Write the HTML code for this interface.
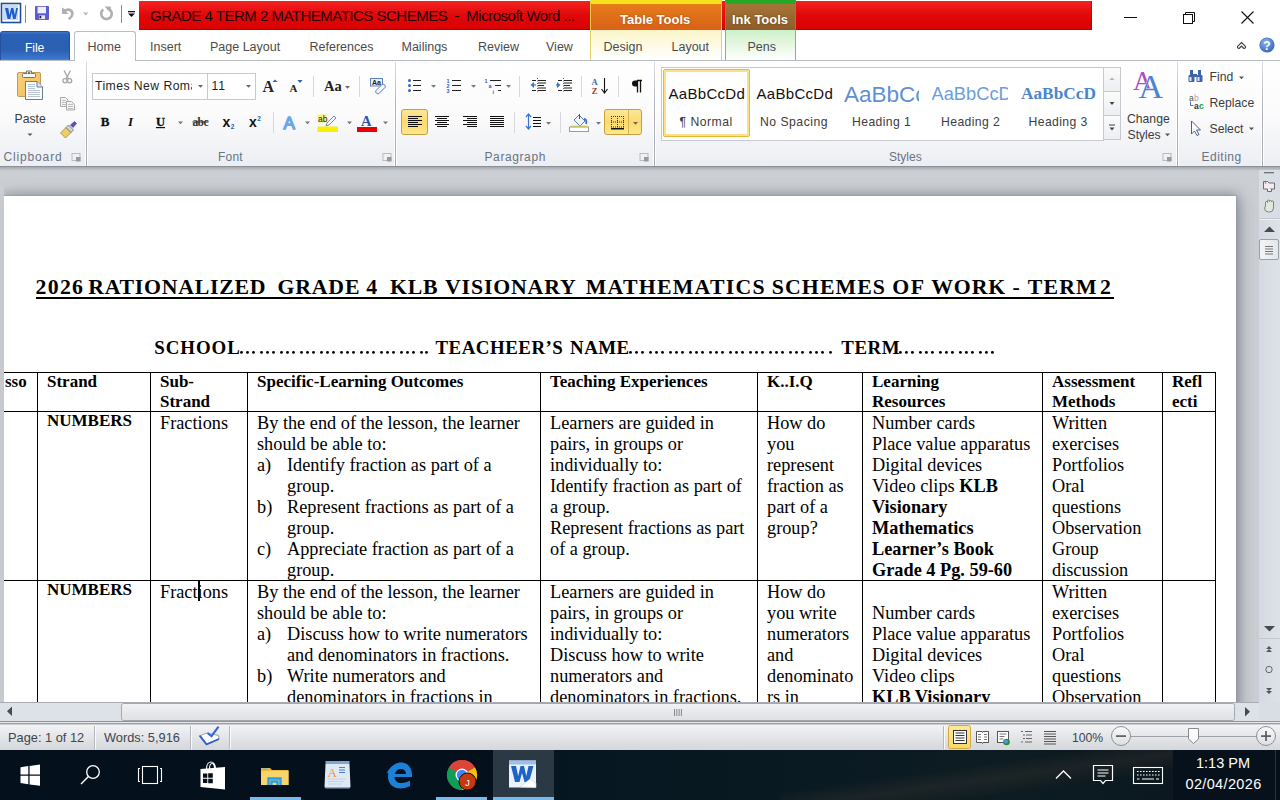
<!DOCTYPE html>
<html><head><meta charset="utf-8">
<style>
*{box-sizing:border-box;margin:0;padding:0}
html,body{width:1280px;height:800px;overflow:hidden;background:#fff;font-family:"Liberation Sans",sans-serif;position:relative}
.a{position:absolute}
.ui{font-family:"Liberation Sans",sans-serif;font-size:12px;color:#3b3b3b;white-space:nowrap}
/* title bar */
#title{left:0;top:0;width:1280px;height:30px;background:#fff}
#redbar{left:139px;top:1px;width:953px;height:29px;background:linear-gradient(#f52222,#e00808 50%,#d90000);box-shadow:inset -1px -1px 0 rgba(150,0,0,.5)}
#redbar span{position:absolute;left:11px;top:6px;font-size:15px;color:#1e0303;letter-spacing:-0.5px}
/* tabs */
#tabs{left:0;top:30px;width:1280px;height:30px;background:#fff}
.tab{position:absolute;top:10px;font-size:12.5px;color:#4b4b4b}
/* ribbon */
#ribbon{left:0;top:60px;width:1280px;height:107px;background:linear-gradient(#ffffff 0%,#fbfbfc 50%,#eceef2 100%);border-top:1px solid #b9bdc3;border-bottom:1px solid #8c9097}
.gsep{position:absolute;top:62px;width:1px;height:104px;background:linear-gradient(#d8dbe0,#b0b4ba 40%,#a9adb3);box-shadow:1px 0 0 #fff,-1px 0 0 #fff}
.glabel{position:absolute;top:149.7px;font-size:12px;color:#6a7384;white-space:nowrap}
.rt{position:absolute;font-size:12.2px;color:#3c3c3c;white-space:nowrap}
/* doc area */
#doc{left:0;top:167px;width:1280px;height:535px;background:#cbced3;overflow:hidden}
#page{left:4px;top:29px;width:1232px;height:700px;background:#fff;box-shadow:0 0 0 1px rgba(150,156,165,.6),0 0 11px 2px rgba(95,100,108,.55),10px 0 16px -6px rgba(110,114,120,.35)}
#shtop{left:4px;top:19px;width:1255px;height:10px;background:linear-gradient(rgba(150,154,160,0),rgba(150,154,160,.75))}
#shright{left:1236px;top:19px;width:23px;height:520px;background:linear-gradient(90deg,rgba(140,144,150,.85),rgba(170,174,180,.45) 35%,rgba(203,206,211,0))}
#shrib{left:0;top:0;width:1280px;height:4px;background:linear-gradient(rgba(160,164,170,.9),rgba(203,206,211,0))}
.serif{font-family:"Liberation Serif",serif;color:#000;white-space:nowrap}
/* scrollbars */
#vscroll{left:1259px;top:170px;width:21px;height:532px;background:linear-gradient(90deg,#d5d9e1,#dde1e8);overflow:hidden}
#hscroll{left:0;top:702px;width:1280px;height:21px;background:#dde1e8}
#status{left:0;top:725px;width:1280px;height:25px;background:linear-gradient(#f2f3f5,#d4d7db)}
#taskbar{left:0;top:750px;width:1280px;height:50px;background:#04101c}

#docin{position:absolute;left:0;top:-167px;width:1280px;height:800px}
.t,.th,.tt,.sc{position:absolute;font-family:"Liberation Serif",serif;color:#000;white-space:nowrap}
.t{font-size:18.3px;line-height:21.03px}
.th{font-size:17px;line-height:20px;font-weight:bold}
.tt{font-size:21.8px;line-height:20px;font-weight:bold;letter-spacing:0.55px;top:276.6px}
.sc{font-size:18.9px;line-height:20px;font-weight:bold;letter-spacing:0.5px;top:338.4px}
.dots{overflow:hidden;letter-spacing:0}
.ln{position:absolute;background:#000}
</style></head>
<body>
<div id="title" class="a">
  <svg class="a" style="left:0;top:0" width="139" height="30" viewBox="0 0 139 30">
    <rect x="1.5" y="3.5" width="19" height="19" fill="#fff" stroke="#1f4f9c" stroke-width="1.6"/>
    <rect x="3" y="5" width="15" height="15" fill="#c9dcf5"/>
    <path d="M5 8h3.2l1.3 7 1.6-7h2.2l1.6 7 1.3-7H18l-2.4 11h-2.4l-1.5-6.5-1.5 6.5H7.6z" fill="#1a5fc9"/>
    <rect x="25" y="5" width="1" height="18" fill="#8a8a8a"/>
    <rect x="35" y="6" width="14" height="14" rx="1" fill="#5b5bd6"/>
    <rect x="37.5" y="6.8" width="8.5" height="6.5" fill="#eef0fa"/>
    <rect x="39" y="15.3" width="6" height="3.8" fill="#e8e8f0"/>
    <rect x="39.5" y="15.8" width="1.8" height="2.5" fill="#222"/>
    <path d="M62 7.5v6.5h6.5l-2.4-2.4c1.8-1.3 4.2-.6 4.8 1.4.6 2-.6 3.8-3 5.2l1.3 1.7c3.6-1.9 5.2-5 4.2-8.2-1.1-3.4-5.4-4.6-8.4-2.4z" fill="#b0b0b0"/>
    <path d="M83 12.5h5.5l-2.75 3z" fill="#b9b9b9"/>
    <path d="M103.2 9.6a5.3 5.3 0 1 0 3.8-1.1" fill="none" stroke="#b0b0b0" stroke-width="2.6"/>
    <path d="M104.5 6.5h6.3v6.3z" fill="#b0b0b0"/>
    <rect x="121" y="5" width="1" height="18" fill="#8a8a8a"/>
    <rect x="128" y="11" width="7" height="1.3" fill="#111"/>
    <path d="M128 13.5h7l-3.5 3.6z" fill="#111"/>
  </svg>
  <div id="redbar" class="a"><span>GRADE 4 TERM 2 MATHEMATICS SCHEMES &nbsp;-&nbsp; Microsoft Word ...</span></div>
  <div class="a" style="left:590px;top:0;width:132px;height:30px;background:linear-gradient(#e8801a,#d86118);border-left:1px solid #f2d24a;border-right:1px solid #f2d24a">
    <div class="a" style="left:0;top:0;width:130px;height:4px;background:#f7e11c"></div>
    <div class="a" style="left:29px;top:11.5px;font-size:13px;font-weight:bold;color:#fff;text-shadow:0 0 2px rgba(120,50,0,.6)">Table Tools</div>
  </div>
  <div class="a" style="left:722px;top:1px;width:3px;height:28px;background:linear-gradient(#f41c1c,#d80000)"></div>
  <div class="a" style="left:725px;top:0;width:71px;height:30px;background:linear-gradient(#a97a3a,#8e5b2b);border-left:1px solid #3cad3c;border-right:1px solid #3cad3c">
    <div class="a" style="left:0;top:0;width:69px;height:4px;background:#23a923"></div>
    <div class="a" style="left:6px;top:11.5px;font-size:13px;font-weight:bold;color:#fff;text-shadow:0 0 2px rgba(60,40,0,.6)">Ink Tools</div>
  </div>
  <svg class="a" style="left:1110px;top:0" width="170" height="30">
    <rect x="14" y="17" width="13" height="1" fill="#111"/>
    <rect x="73.5" y="14.5" width="9" height="9" fill="none" stroke="#111"/>
    <path d="M75.5 14.5v-2h9v9h-2" fill="none" stroke="#111"/>
    <path d="M131.5 11.5l12 12M143.5 11.5l-12 12" stroke="#111" stroke-width="1.1"/>
  </svg>
</div>
<div id="tabs" class="a">
  <div class="a" style="left:0;top:1px;width:70px;height:30px;border-radius:3px 3px 0 0;background:linear-gradient(#3d78cf 0%,#2b62b6 8%,#2a5fb2 60%,#3a76cc 92%,#5c9ae0 100%);border:1px solid #2451a0;border-bottom:none"></div>
  <div class="a" style="left:25px;top:11px;font-size:12.2px;color:#fff;letter-spacing:-0.1px">File</div>
  <div class="a" style="left:74px;top:1px;width:62px;height:30px;border-radius:3px 3px 0 0;background:#fff;border:1px solid #b9bdc3;border-bottom:none"></div>
  <div class="tab" style="left:87.5px">Home</div>
  <div class="tab" style="left:150px">Insert</div>
  <div class="tab" style="left:210px">Page Layout</div>
  <div class="tab" style="left:309.5px">References</div>
  <div class="tab" style="left:401.5px">Mailings</div>
  <div class="tab" style="left:478px">Review</div>
  <div class="tab" style="left:546px">View</div>
  <div class="a" style="left:590px;top:0;width:132px;height:30px;background:linear-gradient(#fbf4c6,#fdfbe8 55%,#ffffff);border-left:1px solid #e6d06a;border-right:1px solid #e6d06a"></div>
  <div class="tab" style="left:603.5px">Design</div>
  <div class="tab" style="left:671.5px">Layout</div>
  <div class="a" style="left:725px;top:0;width:71px;height:30px;background:linear-gradient(#cdf0c8,#e8f8e4 55%,#ffffff);border-left:1px solid #6cc46c;border-right:1px solid #6cc46c"></div>
  <div class="tab" style="left:747.5px">Pens</div>
  <svg class="a" style="left:1230px;top:0" width="50" height="30">
    <path d="M7.8 16.2l3.7-3.7 3.7 3.7c.8.8.3 2.2-.9 2.2-.4 0-.7-.2-.9-.4l-1.9-1.9-1.9 1.9c-.2.2-.5.4-.9.4-1.2 0-1.7-1.4-.9-2.2z" fill="#fff" stroke="#3a3a3a" stroke-width="1.1"/>
    <circle cx="37" cy="15" r="7.6" fill="#3f72c4"/>
    <circle cx="37" cy="15" r="7" fill="url(#hg)"/>
    <defs><radialGradient id="hg" cx=".4" cy=".3" r=".8"><stop offset="0" stop-color="#8db4ea"/><stop offset="1" stop-color="#2f62b8"/></radialGradient></defs>
    <text x="37" y="20" text-anchor="middle" font-family="Liberation Sans" font-weight="bold" font-size="12" fill="#fff">?</text>
  </svg>
</div>
<div id="ribbon" class="a"><div class="a" style="left:0;top:-61px;width:1280px;height:170px">
  <div class="a" style="left:75px;top:60px;width:60px;height:1px;background:#fff"></div>
    <div class="gsep" style="left:86px"></div>
  <div class="gsep" style="left:395px"></div>
  <div class="gsep" style="left:654px"></div>
  <div class="gsep" style="left:1177px"></div>
  <div class="gsep" style="left:1262px"></div>
  <div class="glabel" style="left:3.5px;letter-spacing:0.85px">Clipboard</div>
  <div class="glabel" style="left:218px;letter-spacing:0.2px">Font</div>
  <div class="glabel" style="left:484.5px;letter-spacing:0.6px">Paragraph</div>
  <div class="glabel" style="left:889px">Styles</div>
  <div class="glabel" style="left:1201.5px;letter-spacing:0.5px">Editing</div>
  <div class="rt" style="left:14.5px;top:112px">Paste</div>
  <div class="a" style="left:92px;top:73px;width:116px;height:27px;background:#fff;border:1px solid #c6cacf"></div>
  <div class="a" style="left:207px;top:73px;width:49px;height:27px;background:#fff;border:1px solid #c6cacf"></div>
  <div class="a" style="left:95px;top:78.5px;width:97px;height:16px;overflow:hidden;font-size:12.2px;color:#1e1e1e;white-space:nowrap;letter-spacing:0.45px">Times New Roman</div>
  <div class="a" style="left:211.5px;top:78.5px;font-size:12.2px;color:#1e1e1e;letter-spacing:1px">11</div>
  <div class="gallery a" style="left:661px;top:67px;width:443px;height:74px;background:#fff;border:1px solid #c6cacf"></div>
  <div class="a" style="left:663px;top:69px;width:87px;height:68px;border:1px solid #e8b83a;border-radius:2px;background:#fff;box-shadow:inset 0 0 0 2px #fbe08a"></div>
  <div class="a" style="left:668.5px;top:85px;font-size:15px;color:#111;white-space:nowrap;letter-spacing:0.3px">AaBbCcDd</div>
  <div class="a" style="left:756.5px;top:85px;font-size:15px;color:#111;white-space:nowrap;letter-spacing:0.3px">AaBbCcDd</div>
  <div class="a" style="left:844px;top:81.5px;width:75px;overflow:hidden;font-size:22.5px;color:#5d90d4;white-space:nowrap">AaBbCc</div>
  <div class="a" style="left:931.5px;top:83px;width:76px;overflow:hidden;font-size:18.3px;color:#6b9ddb;white-space:nowrap">AaBbCcD</div>
  <div class="a" style="left:1021px;top:84px;font-family:'Liberation Serif',serif;font-weight:bold;font-size:17.3px;color:#4a86d0;white-space:nowrap">AaBbCcD</div>
  <div class="rt" style="left:679.5px;top:114.5px;letter-spacing:0.5px">¶ Normal</div>
  <div class="rt" style="left:760px;top:114.5px;letter-spacing:0.5px">No Spacing</div>
  <div class="rt" style="left:852px;top:114.5px;letter-spacing:0.4px">Heading 1</div>
  <div class="rt" style="left:941px;top:114.5px;letter-spacing:0.4px">Heading 2</div>
  <div class="rt" style="left:1028.5px;top:114.5px;letter-spacing:0.4px">Heading 3</div>
  <div class="a" style="left:1103px;top:67px;width:18px;height:25px;border:1px solid #c6cacf;background:linear-gradient(#fbfbfc,#eceef1)"></div>
  <div class="a" style="left:1103px;top:91px;width:18px;height:25px;border:1px solid #c6cacf;background:linear-gradient(#fbfbfc,#eceef1)"></div>
  <div class="a" style="left:1103px;top:115px;width:18px;height:25px;border:1px solid #c6cacf;background:linear-gradient(#fbfbfc,#eceef1)"></div>
  <div class="rt" style="left:1127px;top:112px">Change</div>
  <div class="rt" style="left:1127.5px;top:128px">Styles</div>
  <div class="rt" style="left:1209.5px;top:70px">Find</div>
  <div class="rt" style="left:1209.5px;top:96px">Replace</div>
  <div class="rt" style="left:1209.5px;top:122px">Select</div>
<svg class="a" style="left:0;top:0" width="1280" height="170" viewBox="0 0 1280 170">
<defs>
 <linearGradient id="gold" x1="0" y1="0" x2="0" y2="1"><stop offset="0" stop-color="#fde79a"/><stop offset=".5" stop-color="#fcd96e"/><stop offset="1" stop-color="#fde98c"/></linearGradient>
 <linearGradient id="clipb" x1="0" y1="0" x2="1" y2="1"><stop offset="0" stop-color="#f9d27a"/><stop offset="1" stop-color="#f0bd5a"/></linearGradient>
</defs>
<!-- clipboard -->
<rect x="17.5" y="72.5" width="23" height="24" rx="1.5" fill="url(#clipb)" stroke="#c49a55"/>
<rect x="22.5" y="73.5" width="13" height="4" rx="1" fill="#f4f6f8" stroke="#66768a"/>
<path d="M26.5 73.5v-2.5h5v2.5" fill="#e8ecef" stroke="#66768a"/>
<circle cx="29" cy="73" r="1" fill="#6a5030"/>
<path d="M25.5 81.5h11.5l5.5 5.5v12.5h-17z" fill="#fafbfd" stroke="#6b7d93"/>
<path d="M37 81.5v5.5h5.5" fill="#dfe6ee" stroke="#6b7d93"/>
<path d="M28 84.5h7M28 86.5h7M28 88.5h7M28 90.5h12M28 92.5h12M28 94.5h12M28 96.5h12" stroke="#b8c4d2" stroke-width="1"/>
<path d="M27.5 133.5h5l-2.5 2.5z" fill="#555"/>
<!-- cut -->
<path d="M64 70.5l4.5 8.5M70.5 70.5l-4.5 8.5" stroke="#a6a6a6" stroke-width="1.3"/>
<circle cx="65" cy="80.8" r="2.1" fill="none" stroke="#a6a6a6" stroke-width="1.3"/>
<circle cx="69.6" cy="80.8" r="2.1" fill="none" stroke="#a6a6a6" stroke-width="1.3"/>
<!-- copy -->
<path d="M60.5 97.5h5l2.5 2.5v6.5h-7.5z" fill="#f4f4f4" stroke="#a9a9a9"/>
<path d="M66.5 101.5h5l3 3v5.5h-8z" fill="#f4f4f4" stroke="#a9a9a9"/>
<path d="M62 100.5h4M62 102.5h4M62 104.5h4M68 104.5h5M68 106.5h5M68 108.5h5" stroke="#bdbdbd"/>
<!-- format painter -->
<path d="M60.5 133l5.5-5.5 5 5-5.5 5.5z" fill="#ecd064" stroke="#9a8438" stroke-width=".8"/>
<path d="M66 127.5l2.5-2.5 5 5-2.5 2.5z" fill="#d0d3da" stroke="#6a6a6a" stroke-width=".8"/>
<path d="M70.5 125l4-3.5 2 2-3.5 4z" fill="#5454c8" stroke="#34348a" stroke-width=".6"/>
<rect x="72" y="153.5" width="8" height="7" fill="none" stroke="#bbb"/>
<rect x="76" y="157" width="4.5" height="4.5" fill="#999"/>
<!-- font combos arrows -->
<path d="M198 85h5l-2.5 2.8z" fill="#666"/>
<path d="M246 85h5l-2.5 2.8z" fill="#666"/>
<!-- grow / shrink -->
<text x="262.5" y="92" font-family="Liberation Serif" font-weight="bold" font-size="16" fill="#222">A</text>
<path d="M272.5 82h5l-2.5-2.6z" fill="#2f5eb8"/>
<text x="289.5" y="92" font-family="Liberation Serif" font-weight="bold" font-size="11" fill="#222">A</text>
<path d="M297.5 80h5l-2.5 3z" fill="#2f5eb8"/>
<rect x="313" y="76" width="1" height="21" fill="#d5d8dc"/>
<text x="324" y="91" font-family="Liberation Serif" font-weight="bold" font-size="14.5" fill="#222">Aa</text>
<path d="M345 86h5l-2.5 2.8z" fill="#666"/>
<rect x="359" y="76" width="1" height="21" fill="#d5d8dc"/>
<rect x="370.5" y="78.5" width="12" height="7.5" fill="#e9f0fb" stroke="#5c82c0"/>
<text x="372" y="85" font-family="Liberation Sans" font-weight="bold" font-size="7" fill="#222">Aa</text>
<path d="M376 90.5l6-6a2.2 2.2 0 0 1 3 3l-6 6a2.2 2.2 0 0 1-3-3z" fill="#f2f5fa" stroke="#5a7fbf"/>
<!-- row 2 -->
<text x="100.8" y="126" font-family="Liberation Serif" font-weight="bold" font-size="13" fill="#111" stroke="#111" stroke-width=".3">B</text>
<text x="128" y="126" font-family="Liberation Serif" font-style="italic" font-weight="bold" font-size="13" fill="#111">I</text>
<text x="156" y="126" font-family="Liberation Serif" font-weight="bold" font-size="12.5" fill="#111" stroke="#111" stroke-width=".3">U</text>
<rect x="156" y="127" width="9" height="1.2" fill="#111"/>
<path d="M178 121.5h5l-2.5 2.8z" fill="#777"/>
<text x="192.5" y="126" font-family="Liberation Serif" font-weight="bold" font-size="11.5" fill="#333" textLength="16">abc</text>
<rect x="192.5" y="121.5" width="16" height="1" fill="#333"/>
<text x="222.5" y="126.5" font-family="Liberation Sans" font-weight="bold" font-size="14" fill="#111">x</text>
<text x="230.8" y="128.5" font-family="Liberation Sans" font-weight="bold" font-size="6.5" fill="#2f5eb8">2</text>
<text x="249" y="126.5" font-family="Liberation Sans" font-weight="bold" font-size="14" fill="#111">x</text>
<text x="257.3" y="120.5" font-family="Liberation Sans" font-weight="bold" font-size="6.5" fill="#2f5eb8">2</text>
<rect x="273" y="112" width="1" height="21" fill="#d5d8dc"/>
<text x="283.5" y="129" font-family="Liberation Sans" font-size="17" fill="#cfe3fb" stroke="#6aa6e8" stroke-width="1.4">A</text>
<path d="M305 121.5h5l-2.5 2.8z" fill="#777"/>
<rect x="317.5" y="114.5" width="9" height="8" fill="#f6f27a"/>
<text x="318" y="121.5" font-family="Liberation Sans" font-size="8.5" fill="#222">ab</text>
<path d="M327 123l7-7 2 2-7 7-3 1z" fill="#f3f6fb" stroke="#4d6fa6" stroke-width=".8"/>
<rect x="317.5" y="126.5" width="20.5" height="5.5" fill="#f7f000"/>
<path d="M347 121.5h5l-2.5 2.8z" fill="#777"/>
<text x="361" y="126" font-family="Liberation Serif" font-weight="bold" font-size="14.5" fill="#2a55b0">A</text>
<rect x="357" y="127" width="20" height="5" fill="#ea0000"/>
<path d="M383 121.5h5l-2.5 2.8z" fill="#777"/>
<rect x="383" y="153.5" width="8" height="7" fill="none" stroke="#bbb"/>
<rect x="387" y="157" width="4.5" height="4.5" fill="#999"/>
<!-- paragraph row 1 -->
<g fill="#3a62b8"><circle cx="409.5" cy="80.5" r="1.5"/><circle cx="409.5" cy="85.5" r="1.5"/><circle cx="409.5" cy="90.5" r="1.5"/></g>
<path d="M413 80.5h8M413 85.5h8M413 90.5h8" stroke="#222" stroke-width="1.2"/>
<path d="M431 85h5l-2.5 2.8z" fill="#777"/>
<g font-family="Liberation Sans" font-weight="bold" font-size="5.5" fill="#3560b8"><text x="446.5" y="83">1</text><text x="446.5" y="88">2</text><text x="446.5" y="93">3</text></g>
<path d="M452 80.5h9M452 85.5h9M452 90.5h9" stroke="#222" stroke-width="1.2"/>
<path d="M471 85h5l-2.5 2.8z" fill="#777"/>
<g font-family="Liberation Sans" font-weight="bold" font-size="5.5" fill="#3560b8"><text x="484.5" y="83">1</text><text x="488.5" y="88">a</text><text x="492.5" y="93.5">i</text></g>
<path d="M490 80.5h11M495 85.5h6M498 90.5h3" stroke="#222" stroke-width="1.2"/>
<path d="M506 85h5l-2.5 2.8z" fill="#777"/>
<rect x="519" y="76" width="1" height="21" fill="#d5d8dc"/>
<path d="M532 80.5h4M538 80.5h8M538 83h8M538 85.5h6M538 88h8M532 90.5h4M538 90.5h8" stroke="#222" stroke-width="1.1"/>
<path d="M537.5 78v15" stroke="#333" stroke-dasharray="1 1.5" stroke-width=".8"/>
<path d="M530.5 85l3.5-3v6z" fill="#3a72d8"/><path d="M533 85h3" stroke="#3a72d8" stroke-width="1.2"/>
<path d="M558 80.5h4M564 80.5h8M564 83h8M564 85.5h6M564 88h8M558 90.5h4M564 90.5h8" stroke="#222" stroke-width="1.1"/>
<path d="M563.5 78v15" stroke="#333" stroke-dasharray="1 1.5" stroke-width=".8"/>
<path d="M560.5 85l-3.5-3v6z" fill="#3a72d8"/><path d="M556 85h3" stroke="#3a72d8" stroke-width="1.2"/>
<rect x="581" y="76" width="1" height="21" fill="#d5d8dc"/>
<text x="591.5" y="85" font-family="Liberation Serif" font-weight="bold" font-size="8.5" fill="#3560b8">A</text>
<text x="591.8" y="93.5" font-family="Liberation Serif" font-weight="bold" font-size="8.5" fill="#a03030">Z</text>
<path d="M604.5 78v14" stroke="#111" stroke-width="1.1"/><path d="M601.5 89l3 4 3-4" fill="none" stroke="#111" stroke-width="1.1"/>
<rect x="618" y="76" width="1" height="21" fill="#d5d8dc"/>
<path d="M637 80.5h5M637.5 80.5v12M640.5 80.5v12" stroke="#111" stroke-width="1.3"/>
<path d="M637 80.5h-2a3 3 0 0 0 0 6h2z" fill="#111"/>
<!-- paragraph row 2 -->
<rect x="401.5" y="109.5" width="26" height="25" rx="2.5" fill="url(#gold)" stroke="#c6a03e"/>
<path d="M408 116.5h14M408 118.5h10M408 120.5h14M408 122.5h10M408 124.5h14M408 126.5h10" stroke="#111" stroke-width="1"/>
<path d="M435 116.5h14M437 118.5h10M435 120.5h14M437 122.5h10M435 124.5h14M437 126.5h10" stroke="#111" stroke-width="1"/>
<path d="M463 116.5h14M467 118.5h10M463 120.5h14M467 122.5h10M463 124.5h14M467 126.5h10" stroke="#111" stroke-width="1"/>
<path d="M490 116.5h14M490 118.5h14M490 120.5h14M490 122.5h14M490 124.5h14M490 126.5h14" stroke="#111" stroke-width="1"/>
<rect x="514" y="112" width="1" height="21" fill="#d5d8dc"/>
<path d="M528.5 114v15" stroke="#3a72d8" stroke-width="1.2"/>
<path d="M526 117l2.5-3 2.5 3M526 126l2.5 3 2.5-3" fill="none" stroke="#3a72d8" stroke-width="1.2"/>
<path d="M533 117.5h8M533 120.5h8M533 123.5h8M533 126.5h8" stroke="#111" stroke-width="1.1"/>
<path d="M546 122h5l-2.5 2.8z" fill="#777"/>
<rect x="560" y="112" width="1" height="21" fill="#d5d8dc"/>
<path d="M574 120l5-5 6 6-5 5z" fill="#eef3fb" stroke="#4a6ea8" stroke-width=".9"/>
<path d="M579.5 114v5" stroke="#555" stroke-width="1"/>
<path d="M584 119c2 0 3 2 2 5" fill="none" stroke="#3a6fd0" stroke-width="1.8"/>
<rect x="571" y="125.5" width="16" height="1.3" fill="#f0e800"/>
<rect x="569.5" y="127" width="19" height="4.5" fill="#fff" stroke="#999"/>
<path d="M596 122h5l-2.5 2.8z" fill="#777"/>
<rect x="604.5" y="109.5" width="37" height="25" rx="2.5" fill="url(#gold)" stroke="#c6a03e"/>
<path d="M628.5 110v24" stroke="#d8b458"/>
<path d="M611 116.5h13M611 122h13M611 127h13M611.5 116v11M617.5 116v11M623.5 116v11" stroke="#333" stroke-width="1" stroke-dasharray="1 1"/>
<rect x="611" y="128" width="13" height="1.5" fill="#111"/>
<path d="M633 122h5l-2.5 2.8z" fill="#666"/>
<rect x="640" y="153.5" width="8" height="7" fill="none" stroke="#bbb"/>
<rect x="644" y="157" width="4.5" height="4.5" fill="#999"/>
<!-- styles gallery arrows -->
<path d="M1109.5 80h5l-2.5-2.6z" fill="#b0b0b0"/>
<path d="M1109.5 102h5l-2.5 3z" fill="#444"/>
<rect x="1109" y="124.5" width="6" height="1" fill="#444"/>
<path d="M1109.5 127.5h5l-2.5 3z" fill="#444"/>
<!-- change styles -->
<text x="1133" y="89.8" font-family="Liberation Serif" font-size="27" fill="#b24ac4">A</text>
<text x="1138.5" y="98.3" font-family="Liberation Serif" font-size="34" fill="#4d83d4" stroke="#fff" stroke-width=".6" paint-order="stroke">A</text>
<path d="M1165 133.5h5l-2.5 2.8z" fill="#555"/>
<rect x="1163" y="153.5" width="8" height="7" fill="none" stroke="#bbb"/>
<rect x="1167" y="157" width="4.5" height="4.5" fill="#999"/>
<!-- editing -->
<g fill="#3f63a8"><rect x="1188.5" y="75" width="6" height="7" rx="1"/><rect x="1196.5" y="75" width="6" height="7" rx="1"/><rect x="1190" y="70" width="3" height="6"/><rect x="1198" y="70" width="3" height="6"/><rect x="1193" y="74" width="4" height="3"/></g>
<g fill="#dfe8f6"><rect x="1189.5" y="77" width="2" height="4"/><rect x="1197.5" y="77" width="2" height="4"/></g>
<path d="M1239 76.5h5l-2.5 2.8z" fill="#555"/>
<text x="1189" y="100.5" font-family="Liberation Sans" font-size="8.5" fill="#555">a</text>
<text x="1194" y="100.5" font-family="Liberation Sans" font-size="8.5" fill="#aaa">b</text>
<text x="1194" y="108.5" font-family="Liberation Sans" font-weight="bold" font-size="8.5" fill="#333">a</text>
<text x="1199" y="108.5" font-family="Liberation Sans" font-weight="bold" font-size="8.5" fill="#1a9a1a">c</text>
<path d="M1190.5 101.5v4h3" fill="none" stroke="#3060b0" stroke-width=".9"/>
<path d="M1191.5 121l0 13 3-3 2.5 4.5 2-1-2.5-4.5 4 0z" fill="#fff" stroke="#3a4f78" stroke-width=".9"/>
<path d="M1249 127.5h5l-2.5 2.8z" fill="#555"/>
</svg>

</div></div>
<div id="doc" class="a">
  <div id="shrib" class="a"></div><div id="page" class="a"></div><div class="a" style="left:0;top:19px;width:4px;height:520px;background:linear-gradient(#cbced3,#c6c9ce 20px)"></div>
<div id="docin">
<div class="tt" style="left:35.5px;letter-spacing:1.3px">2026</div>
<div class="tt" style="left:88.2px;letter-spacing:0.75px">RATIONALIZED</div>
<div class="tt" style="left:277.5px;letter-spacing:0.8px">GRADE</div>
<div class="tt" style="left:366.3px;letter-spacing:0.55px">4</div>
<div class="tt" style="left:390px;letter-spacing:0.8px">KLB</div>
<div class="tt" style="left:445px;letter-spacing:0.85px">VISIONARY</div>
<div class="tt" style="left:585.8px;letter-spacing:1.25px">MATHEMATICS</div>
<div class="tt" style="left:771.8px;letter-spacing:1.1px">SCHEMES</div>
<div class="tt" style="left:892.3px;letter-spacing:1.5px">OF</div>
<div class="tt" style="left:931.2px;letter-spacing:0.85px">WORK</div>
<div class="tt" style="left:1012.5px;letter-spacing:0.55px">-</div>
<div class="tt" style="left:1027.7px;letter-spacing:1.2px">TERM</div>
<div class="tt" style="left:1100px;letter-spacing:3.5px">2</div>
<div class="ln" style="left:36px;top:297px;width:1078px;height:2px"></div>
<div class="sc" style="left:154.2px;letter-spacing:0.95px">SCHOOL</div>
<div class="sc" style="left:435.5px;letter-spacing:0.5px">TEACHEER’S</div>
<div class="sc" style="left:570px;letter-spacing:0.5px">NAME</div>
<div class="sc" style="left:841.3px;letter-spacing:0.5px">TERM</div>
<svg style="position:absolute;left:0;top:340px" width="1280" height="20" viewBox="0 340 1280 20"><circle cx="241.5" cy="352.4" r="1.45"/><circle cx="247.5" cy="352.4" r="1.45"/><circle cx="253.5" cy="352.4" r="1.45"/><circle cx="261.5" cy="352.4" r="1.45"/><circle cx="267.5" cy="352.4" r="1.45"/><circle cx="273.5" cy="352.4" r="1.45"/><circle cx="281.5" cy="352.4" r="1.45"/><circle cx="287.5" cy="352.4" r="1.45"/><circle cx="293.5" cy="352.4" r="1.45"/><circle cx="301.5" cy="352.4" r="1.45"/><circle cx="307.5" cy="352.4" r="1.45"/><circle cx="313.5" cy="352.4" r="1.45"/><circle cx="321.5" cy="352.4" r="1.45"/><circle cx="327.5" cy="352.4" r="1.45"/><circle cx="333.5" cy="352.4" r="1.45"/><circle cx="341.5" cy="352.4" r="1.45"/><circle cx="347.5" cy="352.4" r="1.45"/><circle cx="353.5" cy="352.4" r="1.45"/><circle cx="361.5" cy="352.4" r="1.45"/><circle cx="367.5" cy="352.4" r="1.45"/><circle cx="373.5" cy="352.4" r="1.45"/><circle cx="381.5" cy="352.4" r="1.45"/><circle cx="387.5" cy="352.4" r="1.45"/><circle cx="393.5" cy="352.4" r="1.45"/><circle cx="401.5" cy="352.4" r="1.45"/><circle cx="407.5" cy="352.4" r="1.45"/><circle cx="413.5" cy="352.4" r="1.45"/><circle cx="421.5" cy="352.4" r="1.45"/><circle cx="426.5" cy="352.4" r="1.45"/><circle cx="630.5" cy="352.4" r="1.45"/><circle cx="636.5" cy="352.4" r="1.45"/><circle cx="642.5" cy="352.4" r="1.45"/><circle cx="650.5" cy="352.4" r="1.45"/><circle cx="656.5" cy="352.4" r="1.45"/><circle cx="662.5" cy="352.4" r="1.45"/><circle cx="670.5" cy="352.4" r="1.45"/><circle cx="676.5" cy="352.4" r="1.45"/><circle cx="682.5" cy="352.4" r="1.45"/><circle cx="690.5" cy="352.4" r="1.45"/><circle cx="696.5" cy="352.4" r="1.45"/><circle cx="702.5" cy="352.4" r="1.45"/><circle cx="710.5" cy="352.4" r="1.45"/><circle cx="716.5" cy="352.4" r="1.45"/><circle cx="722.5" cy="352.4" r="1.45"/><circle cx="730.5" cy="352.4" r="1.45"/><circle cx="736.5" cy="352.4" r="1.45"/><circle cx="742.5" cy="352.4" r="1.45"/><circle cx="750.5" cy="352.4" r="1.45"/><circle cx="756.5" cy="352.4" r="1.45"/><circle cx="762.5" cy="352.4" r="1.45"/><circle cx="770.5" cy="352.4" r="1.45"/><circle cx="776.5" cy="352.4" r="1.45"/><circle cx="782.5" cy="352.4" r="1.45"/><circle cx="790.5" cy="352.4" r="1.45"/><circle cx="796.5" cy="352.4" r="1.45"/><circle cx="802.5" cy="352.4" r="1.45"/><circle cx="810.5" cy="352.4" r="1.45"/><circle cx="816.5" cy="352.4" r="1.45"/><circle cx="822.5" cy="352.4" r="1.45"/><circle cx="830.5" cy="352.4" r="1.45"/><circle cx="900.4" cy="352.4" r="1.45"/><circle cx="906.4" cy="352.4" r="1.45"/><circle cx="912.4" cy="352.4" r="1.45"/><circle cx="920.4" cy="352.4" r="1.45"/><circle cx="926.4" cy="352.4" r="1.45"/><circle cx="932.4" cy="352.4" r="1.45"/><circle cx="940.4" cy="352.4" r="1.45"/><circle cx="946.4" cy="352.4" r="1.45"/><circle cx="952.4" cy="352.4" r="1.45"/><circle cx="960.4" cy="352.4" r="1.45"/><circle cx="966.4" cy="352.4" r="1.45"/><circle cx="972.4" cy="352.4" r="1.45"/><circle cx="980.4" cy="352.4" r="1.45"/><circle cx="986.4" cy="352.4" r="1.45"/><circle cx="992.4" cy="352.4" r="1.45"/></svg>
<div class="ln" style="left:37px;top:372px;width:1px;height:400px"></div>
<div class="ln" style="left:150px;top:372px;width:1px;height:400px"></div>
<div class="ln" style="left:247px;top:372px;width:1px;height:400px"></div>
<div class="ln" style="left:540px;top:372px;width:1px;height:400px"></div>
<div class="ln" style="left:757px;top:372px;width:1px;height:400px"></div>
<div class="ln" style="left:862px;top:372px;width:1px;height:400px"></div>
<div class="ln" style="left:1042px;top:372px;width:1px;height:400px"></div>
<div class="ln" style="left:1162px;top:372px;width:1px;height:400px"></div>
<div class="ln" style="left:1215px;top:372px;width:1px;height:400px"></div>
<div class="ln" style="left:4px;top:372px;width:1212px;height:1px"></div>
<div class="ln" style="left:4px;top:411px;width:1212px;height:1px"></div>
<div class="ln" style="left:4px;top:580px;width:1212px;height:1px"></div>
<div class="th" style="left:5px;top:372.2px">sso</div>
<div class="th" style="left:47px;top:372.2px">Strand</div>
<div class="th" style="left:160px;top:372.2px">Sub-<br>Strand</div>
<div class="th" style="left:257px;top:372.2px">Specific-Learning Outcomes</div>
<div class="th" style="left:550px;top:372.2px">Teaching Experiences</div>
<div class="th" style="left:767px;top:372.2px">K..I.Q</div>
<div class="th" style="left:872px;top:372.2px">Learning<br>Resources</div>
<div class="th" style="left:1052px;top:372.2px">Assessment<br>Methods</div>
<div class="th" style="left:1172px;top:372.2px">Refl<br>ecti</div>
<div class="th" style="left:47px;top:410.8px">NUMBERS</div>
<div class="t" style="left:160px;top:412.6px">Fractions</div>
<div class="t" style="left:257px;top:412.6px">By the end of the lesson, the learner<br>should be able to:<br>a)<br><br>b)<br><br>c)</div>
<div class="t" style="left:287px;top:412.6px"><br><br>Identify fraction as part of a<br>group.<br>Represent fractions as part of a<br>group.<br>Appreciate fraction as part of a<br>group.</div>
<div class="t" style="left:550px;top:412.6px">Learners are guided in<br>pairs, in groups or<br>individually to:<br>Identify fraction as part of<br>a group.<br>Represent fractions as part<br>of a group.</div>
<div class="t" style="left:767px;top:412.6px">How do<br>you<br>represent<br>fraction as<br>part of a<br>group?</div>
<div class="t" style="left:872px;top:412.6px">Number cards<br>Place value apparatus<br>Digital devices<br>Video clips <b>KLB</b><br><b>Visionary</b><br><b>Mathematics</b><br><b>Learner’s Book</b><br><b>Grade 4 Pg. 59-60</b></div>
<div class="t" style="left:1052px;top:412.6px">Written<br>exercises<br>Portfolios<br>Oral<br>questions<br>Observation<br>Group<br>discussion</div>
<div class="th" style="left:47px;top:579.8px">NUMBERS</div>
<div class="t" style="left:160px;top:581.8px">Fractions</div>
<div class="ln" style="left:198px;top:581px;width:2px;height:20px"></div>
<div class="t" style="left:257px;top:581.8px">By the end of the lesson, the learner<br>should be able to:<br>a)<br><br>b)<br></div>
<div class="t" style="left:287px;top:581.8px"><br><br>Discuss how to write numerators<br>and denominators in fractions.<br>Write numerators and<br>denominators in fractions in</div>
<div class="t" style="left:550px;top:581.8px">Learners are guided in<br>pairs, in groups or<br>individually to:<br>Discuss how to write<br>numerators and<br>denominators in fractions.</div>
<div class="t" style="left:767px;top:581.8px">How do<br>you write<br>numerators<br>and<br>denominato<br>rs in</div>
<div class="t" style="left:872px;top:581.8px"><br>Number cards<br>Place value apparatus<br>Digital devices<br>Video clips<br><b>KLB Visionary</b></div>
<div class="t" style="left:1052px;top:581.8px">Written<br>exercises<br>Portfolios<br>Oral<br>questions<br>Observation</div>
</div>
</div>
<div id="vscroll" class="a">
  <svg class="a" style="left:0;top:-3px" width="21" height="535" viewBox="1259 167 21 535">
    <rect x="1259" y="167" width="21" height="51" fill="#d9dde4"/>
    <rect x="1259" y="218" width="21" height="1" fill="#c3c8cf"/>
    <rect x="1259" y="219" width="21" height="1" fill="#eef0f4"/>
    <rect x="1264" y="172" width="10" height="1.3" fill="#6e7378"/>
    <path d="M1263.5 181.5h4l1.5 1.5h5.5v6h-3v2.5h-4v-2.5h-4z" fill="#f4eaf0" stroke="#6d6d6d"/>
    <path d="M1265 182l1 2M1270.5 188l1.5 2" stroke="#6d6d6d" stroke-width=".8"/>
    <path d="M1265.5 206v-3.5a1 1 0 0 1 2 0v-1.5a1 1 0 0 1 2 0v.5a1 1 0 0 1 2 0v.5a1 1 0 0 1 2 0v6a4 4 0 0 1-4 4h-1a4 4 0 0 1-4-4z" fill="#e2e6dd" stroke="#777" stroke-width=".9"/>
    <path d="M1264 232h11l-5.5-5.5z" fill="#4a4a4a"/>
    <rect x="1259.5" y="239.5" width="19" height="20" rx="1.5" fill="url(#vth)" stroke="#9aa0a8"/>
    <defs><linearGradient id="vth" x1="0" x2="1"><stop offset="0" stop-color="#f4f5f7"/><stop offset="1" stop-color="#e3e6ea"/></linearGradient>
    <linearGradient id="hth" x1="0" x2="0" y1="0" y2="1"><stop offset="0" stop-color="#f1f2f5"/><stop offset="1" stop-color="#dde0e5"/></linearGradient></defs>
    <path d="M1265 246.5h8M1265 249h8M1265 251.5h8M1265 254h8" stroke="#777" stroke-width="1"/>
    <path d="M1264 626h11l-5.5 5.5z" fill="#4a4a4a"/>
    <rect x="1259" y="638" width="21" height="1" fill="#c3c8cf"/>
    <path d="M1266 649h6l-3-3zM1266 652h6l-3-3z" fill="#555"/>
    <circle cx="1269" cy="669.5" r="3.2" fill="none" stroke="#666" stroke-width="1"/>
    <path d="M1266 688h6l-3 3zM1266 691h6l-3 3z" fill="#555"/>
  </svg>
</div>
<div id="hscroll" class="a">
  <svg class="a" style="left:0;top:0" width="1280" height="21" viewBox="0 702 1280 21">
    <rect x="0" y="702" width="1259" height="1" fill="#a9adb3"/>
    <path d="M12 706.5v9.5l-5-4.75z" fill="#4a4a4a"/>
    <rect x="121.5" y="703.5" width="1113" height="17" rx="2" fill="url(#hth2)" stroke="#a3a8af"/>
    <defs><linearGradient id="hth2" x1="0" x2="0" y1="0" y2="1"><stop offset="0" stop-color="#f1f2f5"/><stop offset="1" stop-color="#dde0e5"/></linearGradient></defs>
    <path d="M674.5 709v7M676.8 709v7M679.1 709v7M681.4 709v7" stroke="#888" stroke-width="1"/>
    <path d="M1245 707v9.5l5-4.75z" fill="#4a4a4a"/>
    <rect x="1259" y="702" width="21" height="21" fill="#d9dde4"/>
    <rect x="0" y="721" width="1280" height="1" fill="#8f9398"/>
    <rect x="0" y="722" width="1280" height="1" fill="#e8eaee"/>
  </svg>
</div>
<div id="status" class="a">
  <svg class="a" style="left:0;top:-2px" width="1280" height="27" viewBox="0 723 1280 27">
    <rect x="0" y="723" width="1280" height="1.5" fill="#9a9ea4"/>
    <path d="M94.5 726v23M190.5 726v23M229.5 726v23M943.5 726v23" stroke="#b4b8be"/>
    <path d="M95.5 726v23M191.5 726v23M230.5 726v23M944.5 726v23" stroke="#fafbfc"/>
    <path d="M200.5 735.5l6.5-2.5 11.5 2.5.5 3.5-12 5.5z" fill="#fff" stroke="#8a8a8a" stroke-width=".8"/>
    <path d="M199.5 735.5l7 8.8 12.5-5.3" fill="none" stroke="#2f5fcc" stroke-width="1.9"/>
    <path d="M207.5 733l4 3.2 7-9.5" fill="none" stroke="#3468d6" stroke-width="2.1"/>
    <rect x="948.5" y="725.5" width="22" height="23" rx="2" fill="url(#goldst)" stroke="#d4a840"/>
    <defs><linearGradient id="goldst" x1="0" x2="0" y1="0" y2="1"><stop offset="0" stop-color="#fde79a"/><stop offset="1" stop-color="#fcd86a"/></linearGradient></defs>
    <rect x="953.5" y="730.5" width="13" height="13" fill="#fff" stroke="#333"/>
    <path d="M955.5 733h9M955.5 735.5h9M955.5 738h9M955.5 740.5h9" stroke="#333" stroke-width="1"/>
    <path d="M976.5 731.5h5.5l.5 1 .5-1h5.5v11h-5.5l-.5 1-.5-1h-5.5z" fill="#fff" stroke="#555"/>
    <path d="M978 734.5h3M978 737h3M978 739.5h3M984 734.5h3M984 737h3M984 739.5h3" stroke="#777"/>
    <rect x="997.5" y="731.5" width="11" height="11" fill="#fff" stroke="#555"/>
    <path d="M999.5 734h7M999.5 736.5h5M999.5 739h4" stroke="#777"/>
    <circle cx="1006.5" cy="742" r="3.3" fill="#2e8a3a"/><circle cx="1006" cy="741.5" r="2" fill="#4a9ad8"/>
    <path d="M1021 731.5h2M1025 731.5h7M1023 735h2M1026 735h6M1023 738.5h2M1026 738.5h6M1021 742h2M1025 742h7" stroke="#666"/>
    <path d="M1044 731.5h12M1044 734h12M1044 736.5h12M1044 739h12M1044 741.5h12M1044 744h12" stroke="#555"/>
    <circle cx="1121" cy="736" r="9.5" fill="url(#zb)" stroke="#8c9096"/>
    <defs><linearGradient id="zb" x1="0" x2="0" y1="0" y2="1"><stop offset="0" stop-color="#fafafa"/><stop offset="1" stop-color="#dcdee2"/></linearGradient></defs>
    <rect x="1116" y="735.3" width="10" height="1.6" fill="#555"/>
    <rect x="1131" y="736" width="126" height="1" fill="#9ea2a8"/>
    <path d="M1188.5 728.5h10v10.5l-5 4.5-5-4.5z" fill="#fafafa" stroke="#858a90"/>
    <circle cx="1266" cy="736" r="9.5" fill="url(#zb)" stroke="#8c9096"/>
    <rect x="1261" y="735.3" width="10" height="1.6" fill="#555"/>
    <rect x="1265.2" y="731" width="1.6" height="10" fill="#555"/>
  </svg>
  <div class="a" style="left:8px;top:5px;font-size:12.8px;color:#40454d">Page: 1 of 12</div>
  <div class="a" style="left:104px;top:5px;font-size:12.8px;color:#40454d">Words: 5,916</div>
  <div class="a" style="left:1072px;top:5.5px;font-size:12.2px;color:#40454d">100%</div>
</div>
<div id="taskbar" class="a">
  <div class="a" style="left:554px;top:0;width:620px;height:50px;background:linear-gradient(90deg,#061621,#0a1a22 40%,#0d1c22 70%,#0b1820)"></div>
  <div class="a" style="left:780px;top:0;width:400px;height:50px;background:linear-gradient(172deg,rgba(0,0,0,0) 40%,rgba(90,70,50,.22) 55%,rgba(0,0,0,0) 72%)"></div>
  <div class="a" style="left:1173px;top:0;width:103px;height:50px;background:#06111b"></div>
  <div class="a" style="left:493px;top:0;width:61px;height:50px;background:#2b3945"></div>
  <svg class="a" style="left:0;top:0" width="1280" height="50" viewBox="0 750 1280 50">
    <path d="M20.5 767.2l7.8-1.1v8.4h-7.8zM29.6 765.9l10.4-1.4v10h-10.4zM20.5 775.8h7.8v8.4l-7.8-1.1zM29.6 775.8h10.4v10l-10.4-1.4z" fill="#fff"/>
    <circle cx="93" cy="772" r="6.3" fill="none" stroke="#fff" stroke-width="1.3"/>
    <path d="M88.4 776.6l-7.4 7.4" stroke="#fff" stroke-width="1.4"/>
    <rect x="142.5" y="766.5" width="15" height="17" fill="none" stroke="#fff" stroke-width="1.1"/>
    <path d="M140 768.5h-1.5v13h1.5M160 768.5h1.5v13h-1.5" fill="none" stroke="#fff" stroke-width="1.1"/>
    <path d="M200.5 769l24.5-2v22.5l-24.5-2.5z" fill="#fff"/>
    <path d="M206.5 769c0-5 2.5-7 4.5-7s4.5 2 4.5 7M209.5 769c0-4 1.2-5.5 2.5-5.5s2.5 1.5 2.5 5.5" fill="none" stroke="#fff" stroke-width="1.1"/>
    <path d="M203 773.5h4.3v4.3h-4.3zM208.2 773.3h4.6v4.5h-4.6zM203 778.7h4.3v4.3h-4.3zM208.2 778.7h4.6v4.6h-4.6z" fill="#06101a"/>
    <path d="M261 768h9l2 2h16.5v15h-27.5z" fill="#e8b93e"/>
    <rect x="261" y="771" width="27.5" height="14" fill="#f8d56a"/>
    <rect x="262.5" y="768.5" width="5" height="1.5" fill="#6ab8f0"/>
    <path d="M268.5 785v-6.5h12v6.5M271.5 785v-3.5h6v3.5" fill="none" stroke="#2a9fe8" stroke-width="2.4"/>
    <rect x="250" y="797" width="51" height="3" fill="#76b9ed"/>
    <rect x="325.5" y="761" width="24" height="3" fill="#7fa7cf"/>
    <path d="M325.5 764h24l1 23h-26z" fill="#dde9f5"/>
    <path d="M324.5 787h26l-1 1.5h-24z" fill="#8aa8c8"/>
    <text x="327.5" y="777" font-family="Liberation Serif" font-size="13" fill="#f5922a">A</text>
    <path d="M339 767.5h6M339 770h6M339 772.5h6" stroke="#4d7fd4" stroke-width="1.2"/>
    <path d="M328 779h18M328 781.5h16M328 784h14" stroke="#c6d2de" stroke-width="1"/>
    <path d="M388.5 773.5c1-7 6.5-11 12.5-11 7 0 11 5.5 11 12.5v2h-17.5c.3 4 3 6 7 6 3.5 0 6-1 8.5-2.5v5.5c-2.5 1.5-6 2.5-9.5 2.5-7 0-12.5-4.5-12.5-11.5 0-2 .3-3.8.8-5.5z" fill="#1c80d8"/>
    <path d="M395 774h11c0-3-2-5-5.3-5-3 0-5.2 2-5.7 5z" fill="#06101a"/>
    <path d="M387 773c3-7 9-9.5 13-8.5-4 1-8 5-9.5 9.5z" fill="#1c80d8"/>
    <circle cx="462" cy="775" r="15" fill="#db4437"/>
    <path d="M462 775L449 767.5A15 15 0 0 1 475 767.5z" fill="#db4437"/>
    <path d="M462 775l13-7.5A15 15 0 0 1 462 790z" fill="#f4c20d"/>
    <path d="M462 775v15A15 15 0 0 1 449 767.5z" fill="#0f9d58"/>
    <circle cx="462" cy="775" r="6.5" fill="#fff"/>
    <circle cx="462" cy="775" r="5.2" fill="#4285f4"/>
    <circle cx="467.5" cy="781.5" r="8.5" fill="#c53a10" stroke="#06101a" stroke-width="1"/>
    <text x="467.5" y="786" text-anchor="middle" font-family="Liberation Sans" font-size="9" fill="#fff">J</text>
    <rect x="436" y="797" width="51" height="3" fill="#76b9ed"/>
    <rect x="493" y="797" width="61" height="3" fill="#76b9ed"/>
    <rect x="509" y="760.5" width="27" height="27" fill="#eaf2fb"/>
    <rect x="509" y="760.5" width="27" height="4" fill="#9dc0e8"/>
    <path d="M511 766h5l2.2 10 2.3-10h3.5l2.3 10 2.2-10h5l-4.5 16h-4.5l-2.5-9-2.5 9h-4.5z" fill="#1f63c6"/>
    <path d="M520 787l10-8 6 4v4.5z" fill="#fff" stroke="#c7d4e4" stroke-width=".6"/>
    <path d="M1056 778.5l7.5-7.5 7.5 7.5" fill="none" stroke="#fff" stroke-width="1.3"/>
    <path d="M1093.5 765.5h19v15h-7l-2.5 3-2.5-3h-7z" fill="none" stroke="#fff" stroke-width="1.2"/>
    <path d="M1097.5 770h11M1097.5 773h11M1097.5 776h8" stroke="#fff" stroke-width="1.1"/>
    <rect x="1133.5" y="767.5" width="29" height="16" fill="none" stroke="#fff" stroke-width="1.1"/>
    <path d="M1137 771.5h1.6M1140 771.5h1.6M1143 771.5h1.6M1146 771.5h1.6M1149 771.5h1.6M1152 771.5h1.6M1155 771.5h1.6M1158 771.5h1.6M1137 775h1.6M1140 775h1.6M1143 775h1.6M1146 775h1.6M1149 775h1.6M1152 775h1.6M1155 775h1.6M1158 775h1.6M1137 779h2.5M1142 779h12M1156 779h3" stroke="#fff" stroke-width="1.1"/>
    <rect x="1275" y="750" width="1" height="50" fill="#2a3440"/>
  </svg>
  <div class="a" style="left:1196px;top:5px;font-size:14.5px;color:#fff;letter-spacing:0px">1:13 PM</div>
  <div class="a" style="left:1185.5px;top:26px;font-size:14.5px;color:#fff;letter-spacing:0.35px">02/04/2026</div>
</div>
</body></html>
